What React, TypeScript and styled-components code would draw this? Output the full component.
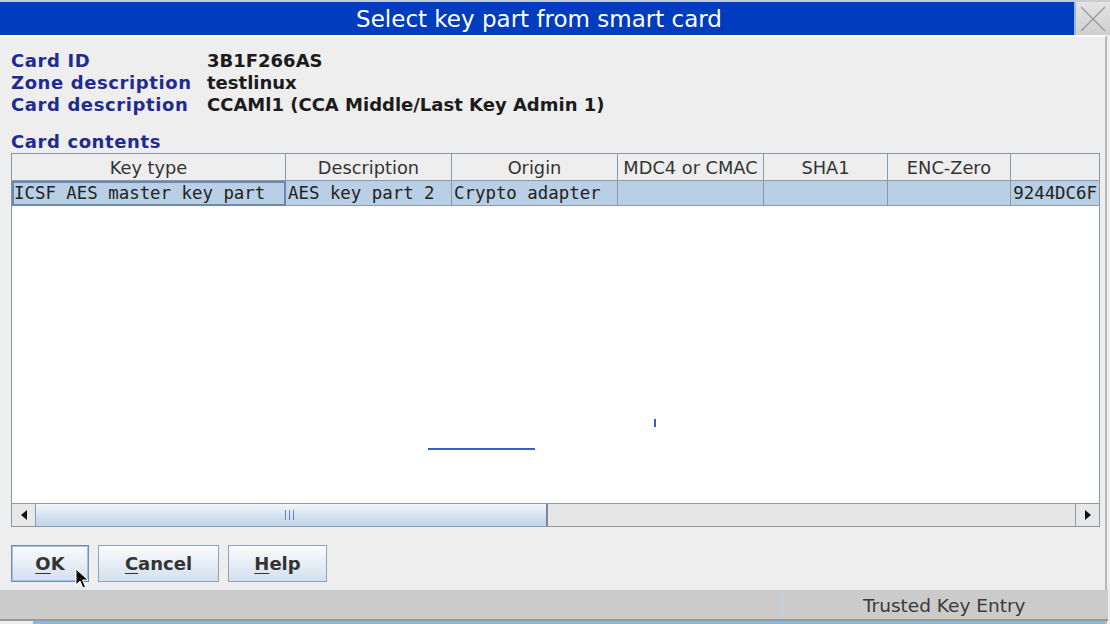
import React from "react";
import styled, { createGlobalStyle } from "styled-components";

const GlobalStyle = createGlobalStyle`
  html, body {
    margin: 0;
    padding: 0;
    background: #eeeeee;
  }
  #root {
    width: 1110px;
    height: 624px;
    overflow: hidden;
  }
`;

const Dialog = styled.div`
  display: flex;
  flex-direction: column;
  width: 1110px;
  height: 624px;
  background: #eeeeee;
  font-family: "DejaVu Sans", "Liberation Sans", sans-serif;
  position: relative;
  overflow: hidden;
`;

const TitleBar = styled.div`
  display: flex;
  align-items: stretch;
  height: 35px;
  flex-shrink: 0;
  border-top: 2px solid #c9ccd3;
  background: #003cbe;
  box-sizing: border-box;
`;

const Title = styled.div`
  flex: 1;
  display: flex;
  align-items: center;
  justify-content: center;
  color: #ffffff;
  font-size: 23px;
  padding-left: 4px;
`;

const CloseButton = styled.div`
  width: 34px;
  border-left: 2px solid #9fb4dc;
  background: linear-gradient(#e4e4e4, #cfcfcf);
  display: flex;
  align-items: center;
  justify-content: center;
`;

const Body = styled.div`
  flex: 1;
  display: flex;
  flex-direction: column;
  padding: 13px 0 0 11px;
  border-top: 2px solid #ffffff;
  border-right: 2px solid #b9b9b9;
  margin-right: 3px;
`;

const InfoGrid = styled.div`
  display: grid;
  grid-template-columns: 196px 1fr;
  font-size: 18px;
  font-weight: bold;
  line-height: 22px;
`;

const Label = styled.div`
  color: #1f2b8f;
  letter-spacing: 0.6px;
`;

const Value = styled.div`
  color: #1b1b1b;
`;

const SectionLabel = styled(Label)`
  font-size: 18px;
  font-weight: bold;
  line-height: 22px;
  margin-top: 15px;
`;

const TableFrame = styled.div`
  width: 1089px;
  height: 374px;
  flex-shrink: 0;
  border: 1px solid #8798a8;
  background: #ffffff;
  display: flex;
  flex-direction: column;
  box-sizing: border-box;
  overflow: hidden;
`;

const Row = styled.div`
  display: flex;
  flex-shrink: 0;
`;

const HeaderCell = styled.div<{ w: number }>`
  width: ${(p) => p.w}px;
  flex-shrink: 0;
  height: 27px;
  box-sizing: border-box;
  background: #eeeeee;
  border-right: 1px solid #8a9aab;
  border-bottom: 1px solid #8a9aab;
  color: #333333;
  font-size: 17.8px;
  display: flex;
  align-items: center;
  justify-content: center;
  white-space: nowrap;
  overflow: hidden;
`;

const DataCell = styled.div<{ w: number; focus?: boolean; right?: boolean }>`
  width: ${(p) => p.w}px;
  flex-shrink: 0;
  height: 25px;
  box-sizing: border-box;
  background: #b8cfe5;
  border-right: 1px solid #8a9aab;
  border-bottom: 1px solid #8a9aab;
  outline: ${(p) => (p.focus ? "2px solid #6a88b0" : "none")};
  outline-offset: -2px;
  color: #222222;
  font-family: "DejaVu Sans Mono", "Liberation Mono", monospace;
  font-size: 17.4px;
  display: flex;
  align-items: center;
  justify-content: ${(p) => (p.right ? "flex-end" : "flex-start")};
  padding: 0 2px;
  white-space: nowrap;
  overflow: hidden;
`;

const Viewport = styled.div`
  flex: 1;
  position: relative;
`;

const Mark = styled.div`
  position: absolute;
  background: #3a5fc0;
`;

const ScrollBar = styled.div`
  display: flex;
  height: 22px;
  flex-shrink: 0;
  border-top: 1px solid #8a9aab;
  background: #e6e6e6;
`;

const ArrowButton = styled.div`
  width: 23px;
  flex-shrink: 0;
  background: #e8e8e8;
  display: flex;
  align-items: center;
  justify-content: center;
`;

const Thumb = styled.div`
  width: 513px;
  border-left: 1px solid #8a9aab;
  border-right: 2px solid #7c8895;
  background: linear-gradient(#f3f7fb, #cddcec 70%, #c4d6ea);
  display: flex;
  align-items: center;
  justify-content: center;
  padding-right: 4px;
  box-sizing: border-box;
`;

const Grip = styled.div`
  width: 7px;
  height: 10px;
  border-left: 1px solid #6b84b8;
  border-right: 1px solid #6b84b8;
  position: relative;
  &::after {
    content: "";
    position: absolute;
    left: 3px;
    top: 0;
    bottom: 0;
    border-left: 1px solid #6b84b8;
  }
`;

const Track = styled.div`
  flex: 1;
  border-right: 1px solid #8a9aab;
`;

const ButtonRow = styled.div`
  display: flex;
  gap: 9px;
  margin-top: 18px;
  position: relative;
  flex-shrink: 0;
`;

const Button = styled.div<{ w: number; focus?: boolean }>`
  width: ${(p) => p.w}px;
  height: 37px;
  box-sizing: border-box;
  border: 1px solid ${(p) => (p.focus ? "#6e8cb5" : "#8ea2bb")};
  box-shadow: ${(p) => (p.focus ? "inset 0 0 0 1px #aac0da" : "none")};
  background: linear-gradient(#fbfcfe, #e3ebf4 60%, #d3e0ee);
  display: flex;
  align-items: center;
  justify-content: center;
  font-size: 18px;
  font-weight: bold;
  color: #333333;
  u {
    text-decoration-thickness: 1px;
    text-underline-offset: 3px;
  }
`;

const Cursor = styled.svg`
  position: absolute;
  left: 64px;
  top: 23px;
`;

const StatusBar = styled.div`
  display: flex;
  height: 28px;
  flex-shrink: 0;
  margin-top: 8px;
  background: #cbcbcb;
  border-top: 1px solid #bcccdc;
  border-bottom: 2px solid #9a9a9a;
  margin-left: -11px;
  margin-right: -3px;
`;

const StatusLeft = styled.div`
  width: 781px;
  border-right: 2px solid #c0d0e0;
`;

const StatusText = styled.div`
  flex: 1;
  display: flex;
  align-items: center;
  padding-left: 80px;
  font-size: 18.5px;
  color: #3a3a3a;
`;

const BottomEdge = styled.div`
  height: 4px;
  flex-shrink: 0;
  background: #8fb4e6;
  margin-left: 22px;
`;

const columns = [
  { title: "Key type", w: 274, value: "ICSF AES master key part", focus: true },
  { title: "Description", w: 166, value: "AES key part 2" },
  { title: "Origin", w: 166, value: "Crypto adapter" },
  { title: "MDC4 or CMAC", w: 146, value: "" },
  { title: "SHA1", w: 124, value: "" },
  { title: "ENC-Zero", w: 123, value: "" },
  { title: "", w: 89, value: "9244DC6F", right: true },
];

const App = () => {
  return (
    <Dialog>
      <GlobalStyle />
      <TitleBar>
        <Title>Select key part from smart card</Title>
        <CloseButton>
          <svg width="30" height="30" viewBox="0 0 30 30">
            <path d="M3 3 L27 27 M27 3 L3 27" stroke="#9a9a9a" strokeWidth="1.4" />
          </svg>
        </CloseButton>
      </TitleBar>
      <Body>
        <InfoGrid>
          <Label>Card ID</Label>
          <Value>3B1F266AS</Value>
          <Label>Zone description</Label>
          <Value>testlinux</Value>
          <Label>Card description</Label>
          <Value>CCAMl1 (CCA Middle/Last Key Admin 1)</Value>
        </InfoGrid>
        <SectionLabel>Card contents</SectionLabel>
        <TableFrame>
          <Row>
            {columns.map((c, i) => (
              <HeaderCell key={i} w={c.w}>
                {c.title}
              </HeaderCell>
            ))}
          </Row>
          <Row>
            {columns.map((c, i) => (
              <DataCell key={i} w={c.w} focus={c.focus} right={c.right}>
                {c.value}
              </DataCell>
            ))}
          </Row>
          <Viewport>
            <Mark style={{ left: 416, top: 242, width: 107, height: 2 }} />
            <Mark style={{ left: 642, top: 213, width: 2, height: 8 }} />
          </Viewport>
          <ScrollBar>
            <ArrowButton>
              <svg width="8" height="10" viewBox="0 0 8 10">
                <path d="M7 0 L1 5 L7 10 Z" fill="#111" />
              </svg>
            </ArrowButton>
            <Thumb>
              <Grip />
            </Thumb>
            <Track />
            <ArrowButton>
              <svg width="8" height="10" viewBox="0 0 8 10">
                <path d="M1 0 L7 5 L1 10 Z" fill="#111" />
              </svg>
            </ArrowButton>
          </ScrollBar>
        </TableFrame>
        <ButtonRow>
          <Button w={78} focus>
            <span>
              <u>O</u>K
            </span>
          </Button>
          <Button w={121}>
            <span>
              <u>C</u>ancel
            </span>
          </Button>
          <Button w={99}>
            <span>
              <u>H</u>elp
            </span>
          </Button>
          <Cursor width="14" height="22" viewBox="0 0 14 22">
            <path
              d="M1 1 L1 17 L5 13 L8 20 L10.5 19 L7.5 12 L13 12 Z"
              fill="#000"
              stroke="#fff"
              strokeWidth="1"
            />
          </Cursor>
        </ButtonRow>
        <StatusBar>
          <StatusLeft />
          <StatusText>Trusted Key Entry</StatusText>
        </StatusBar>
        <BottomEdge />
      </Body>
    </Dialog>
  );
};

export default App;
